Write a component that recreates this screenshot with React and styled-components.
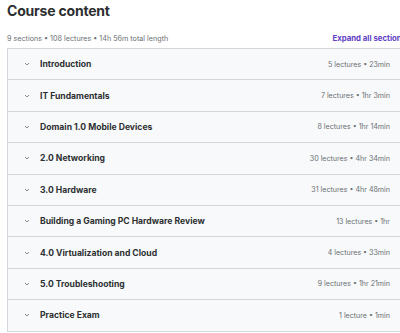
import React from 'react';
import styled, { createGlobalStyle } from 'styled-components';

const GlobalStyle = createGlobalStyle`
  html, body {
    margin: 0;
    padding: 0;
    background: #fff;
    overflow: hidden;
  }
  body {
    font-family: Inter, "Liberation Sans", Arial, sans-serif;
    color: #2d2f31;
  }
`;

const Page = styled.div`
  width: 393px;
  padding: 1px 0 0 7px;
`;

const Title = styled.h2`
  margin: 0;
  font-size: 14px;
  font-weight: 700;
  line-height: 20px;
  letter-spacing: -0.2px;
`;

const Meta = styled.div`
  display: flex;
  align-items: center;
  justify-content: space-between;
  margin-top: 10px;
  margin-right: -6px;
  height: 14px;
`;

const Summary = styled.span`
  font-size: 7.2px;
  color: #6a6f73;
`;

const ExpandAll = styled.button`
  border: 0;
  background: none;
  padding: 0;
  font-family: inherit;
  font-size: 7.8px;
  font-weight: 700;
  color: #6040c4;
  white-space: nowrap;
`;

const Accordion = styled.div`
  margin-top: 3px;
  border: 1px solid #d1d7dc;
  border-right: 0;
`;

const Row = styled.div`
  display: flex;
  align-items: center;
  height: 30.4px;
  padding: 0 10px 0 16px;
  background: #f7f9fa;
  border-top: ${p => (p.first ? '0' : '1px solid #d1d7dc')};
`;

const Chevron = styled.svg`
  width: 6px;
  height: 6px;
  flex: none;
  margin-right: 10px;
`;

const SectionTitle = styled.span`
  flex: 1;
  font-size: 8.6px;
  font-weight: 700;
  color: #2d2f31;
`;

const SectionMeta = styled.span`
  font-size: 7.1px;
  color: #6a6f73;
  white-space: nowrap;
`;

const sections = [
  ['Introduction', '5 lectures • 23min'],
  ['IT Fundamentals', '7 lectures • 1hr 3min'],
  ['Domain 1.0 Mobile Devices', '8 lectures • 1hr 14min'],
  ['2.0 Networking', '30 lectures • 4hr 34min'],
  ['3.0 Hardware', '31 lectures • 4hr 48min'],
  ['Building a Gaming PC Hardware Review', '13 lectures • 1hr'],
  ['4.0 Virtualization and Cloud', '4 lectures • 33min'],
  ['5.0 Troubleshooting', '9 lectures • 1hr 21min'],
  ['Practice Exam', '1 lecture • 1min'],
];

const App = () => (
  <Page>
    <GlobalStyle />
    <Title>Course content</Title>
    <Meta>
      <Summary>9 sections • 108 lectures • 14h 56m total length</Summary>
      <ExpandAll>Expand all sections</ExpandAll>
    </Meta>
    <Accordion>
      {sections.map(([name, info], i) => (
        <Row key={name} first={i === 0}>
          <Chevron viewBox="0 0 6 6">
            <path d="M1 2l2 2 2-2" fill="none" stroke="#6a6f73" strokeWidth="0.8" />
          </Chevron>
          <SectionTitle>{name}</SectionTitle>
          <SectionMeta>{info}</SectionMeta>
        </Row>
      ))}
    </Accordion>
  </Page>
);

export default App;
